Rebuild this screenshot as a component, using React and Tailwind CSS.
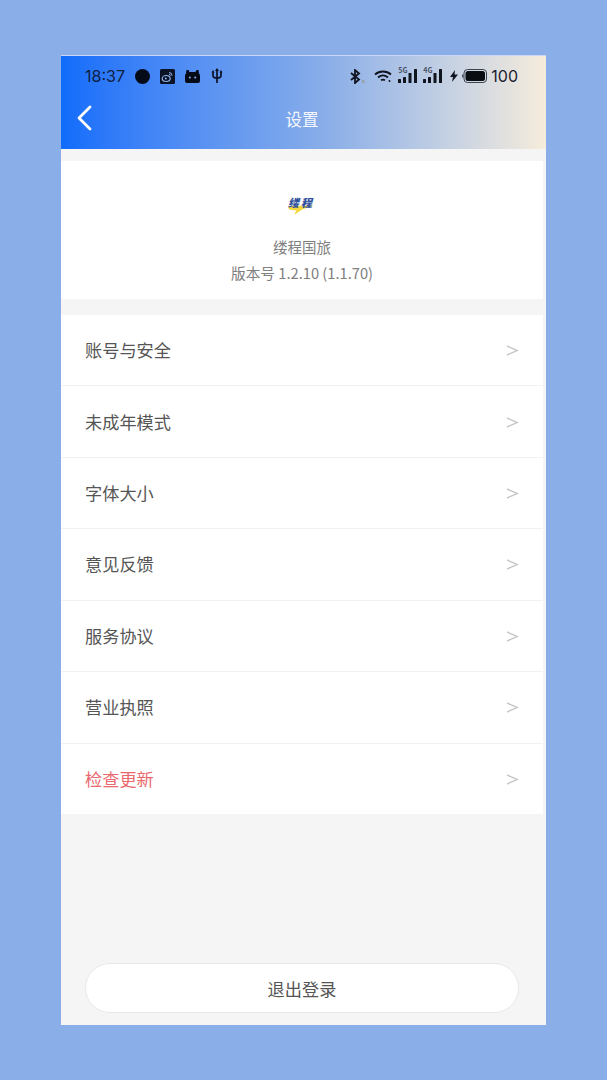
import React from "react";

const FONT = "font-['Noto_Sans_CJK_SC','Noto_Sans',sans-serif]";

const ROWS = [
  { label: "账号与安全" },
  { label: "未成年模式" },
  { label: "字体大小" },
  { label: "意见反馈" },
  { label: "服务协议" },
  { label: "营业执照" },
  { label: "检查更新", danger: true },
];

function Bars({ tag }) {
  return (
    <span className="relative block w-[19px] h-[15px]">
      <span className="absolute left-0 top-[-3px] text-[7px] leading-[8px] font-bold text-[#4a5468]">{tag}</span>
      <svg viewBox="0 0 19 15" className="absolute inset-0 w-[19px] h-[15px]" fill="#10141f">
        <rect x="0" y="10" width="3" height="4" rx="0.5" />
        <rect x="5" y="8" width="3" height="6" rx="0.5" />
        <rect x="10.500" y="4" width="3" height="10" rx="0.5" />
        <rect x="16" y="0" width="3" height="14" rx="0.5" />
      </svg>
    </span>
  );
}

function StatusBar() {
  return (
    <div className="h-[40px] pl-[24px] pr-[28px] flex items-center justify-between text-[#0f1a33]">
      <div className="flex items-center">
        <span className="font-['Inter',sans-serif] text-[16px] leading-[20px] text-[#10203f]">18:37</span>
        <span className="ml-[10px] w-[15px] h-[15px] rounded-full bg-[#050a18]" />
        <svg viewBox="0 0 15 15" className="ml-[10px] w-[15px] h-[15px]">
          <rect width="15" height="15" rx="1.5" fill="#0a1226" />
          <ellipse cx="6.2" cy="9.5" rx="4" ry="3" fill="none" stroke="#8fb2e8" strokeWidth="1.2" />
          <circle cx="5.8" cy="9.6" r="1" fill="#8fb2e8" />
          <path d="M9 3.5a3 3 0 0 1 3 3.2M9 5.3a1.3 1.3 0 0 1 1.3 1.4" fill="none" stroke="#8fb2e8" strokeWidth="1" />
        </svg>
        <svg viewBox="0 0 15 13" className="ml-[10px] w-[15px] h-[13px]">
          <path d="M1.500 0h2l1 2h6l1-2h2l.5 3.500c.6.6 1 1.300 1 2.200V11a2 2 0 0 1-2 2H2a2 2 0 0 1-2-2V5.700c0-.9.4-1.600 1-2.200Z" fill="#050a18" />
          <circle cx="4.800" cy="7.500" r="1" fill="#8fb2e8" />
          <circle cx="10.200" cy="7.500" r="1" fill="#8fb2e8" />
        </svg>
        <svg viewBox="0 0 12 16" className="ml-[11px] w-[12px] h-[16px]" fill="none" stroke="#0a1226" strokeWidth="1.700">
          <path d="M6 2v13M2 4v3.500C2 9.500 3.500 10 6 10s4-.5 4-2.500V4" />
          <path d="M6 0 4 3h4ZM2 2 .5 4.500h3ZM10 2 8.500 4.500h3Z" fill="#0a1226" stroke="none" />
        </svg>
      </div>
      <div className="flex items-center">
        <svg viewBox="0 0 16 15" className="w-[16px] h-[15px]" fill="none" stroke="#10141f" strokeWidth="1.800">
          <path d="M1 4l8 6.500-4 3.500V1l4 3.500L1 11" />
          <rect x="12" y="11" width="2.500" height="3" fill="#9aa3ad" stroke="none" />
        </svg>
        <svg viewBox="0 0 18 13" className="ml-[8px] w-[18px] h-[13px]" fill="none" stroke="#10141f" strokeWidth="1.800">
          <path d="M1 4.500c4.500-4 11.500-4 16 0M4 7.500c3-2.500 7-2.500 10 0M7 10.300c1.300-.8 2.700-.8 4 0" />
          <circle cx="15.500" cy="11" r="1" fill="#10141f" stroke="none" />
        </svg>
        <span className="ml-[6px]"><Bars tag="5G" /></span>
        <span className="ml-[6px]"><Bars tag="4G" /></span>
        <svg viewBox="0 0 8 12" className="ml-[8px] w-[8px] h-[12px]" fill="#10141f">
          <path d="M5 0 0 7h3l-1 5 6-7.500H4.500Z" />
        </svg>
        <svg viewBox="0 0 25 14" className="ml-[4px] w-[25px] h-[14px]">
          <rect x="0" y="5.500" width="1.500" height="3" fill="#4a5568" />
          <rect x="2" y="0.500" width="22.500" height="13" rx="3.500" fill="none" stroke="#39424f" strokeWidth="1" />
          <rect x="3.500" y="2" width="19.500" height="10" rx="2.500" fill="#0a0d12" />
        </svg>
        <span className="ml-[4px] font-['Inter',sans-serif] text-[16px] leading-[20px] text-[#1a2130]">100</span>
      </div>
    </div>
  );
}

function Logo() {
  return (
    <div className="relative w-[28px] h-[22px]">
      <svg viewBox="0 0 28 22" className="absolute inset-0 w-[28px] h-[22px]">
        <path d="M0 12 26 11.500 14 15.500 6 21 8.500 16.500 1 15.500Z" fill="#f2d83c" />
      </svg>
      <span className={`absolute left-[0px] top-[2px] text-[11px] leading-[12px] font-black italic tracking-[2px] whitespace-nowrap text-[#2f4f9c] ${FONT}`}>缕程</span>
    </div>
  );
}

export default function App() {
  return (
    <div className={`w-[607px] h-[1080px] bg-[#8aaee8] pt-[55px] pl-[61px] ${FONT}`}>
      <div className="w-[485px] h-[970px] bg-[#f5f5f5] flex flex-col">
        {/* Gradient header */}
        <div className="h-[94px] shrink-0 border-t border-[#c9d8f4] bg-gradient-to-r from-[#0f6cfb] via-[#8aaee8] via-55% to-[#f6ecdb]">
          <StatusBar />
          <div className="relative h-[47px] pb-[2px] flex items-center justify-center">
            <svg viewBox="0 0 16 26" className="absolute left-[15px] top-[9px] w-[16px] h-[26px]" fill="none" stroke="#fff" strokeWidth="2.800" strokeLinecap="round" strokeLinejoin="round">
              <path d="M14 2 3 13l11 11" />
            </svg>
            <span className="mr-[3px] text-[16.500px] leading-[24px] text-[#f4f7fd]">设置</span>
          </div>
        </div>

        {/* App info */}
        <div className="mt-[12px] mr-[3px] h-[138px] bg-white flex flex-col items-center pt-[33px]">
          <Logo />
          <div className="mt-[18px] text-[14.500px] leading-[26px] text-[#808080]">缕程国旅</div>
          <div className="text-[14.700px] leading-[26px] text-[#808080]">版本号 1.2.10 (1.1.70)</div>
        </div>

        {/* Settings rows */}
        <div className="mt-[16px] mr-[3px] h-[499px] bg-white flex flex-col">
          {ROWS.map((row, i) => (
            <div
              key={row.label}
              className={`flex-1 flex items-center justify-between pl-[24px] pr-[24px] ${i < ROWS.length - 1 ? "border-b border-[#f2f2f2]" : ""}`}
            >
              <span className={`text-[17.200px] leading-[24px] ${row.danger ? "text-[#e9696f]" : "text-[#555]"}`}>{row.label}</span>
              <svg viewBox="0 0 13 13" className="mt-[1px] w-[13px] h-[13px]" fill="none" stroke="#c6c6c6" strokeWidth="1.400">
                <path d="M1 2l10.500 4.500L1 11" />
              </svg>
            </div>
          ))}
        </div>

        {/* Logout */}
        <div className="mt-auto pl-[24px] pr-[27px] pb-[12px]">
          <button className="w-full h-[50px] pt-[1px] rounded-full bg-white border border-[#e9e9e9] text-[17.200px] leading-[24px] text-[#555]">
            退出登录
          </button>
        </div>
      </div>
    </div>
  );
}
